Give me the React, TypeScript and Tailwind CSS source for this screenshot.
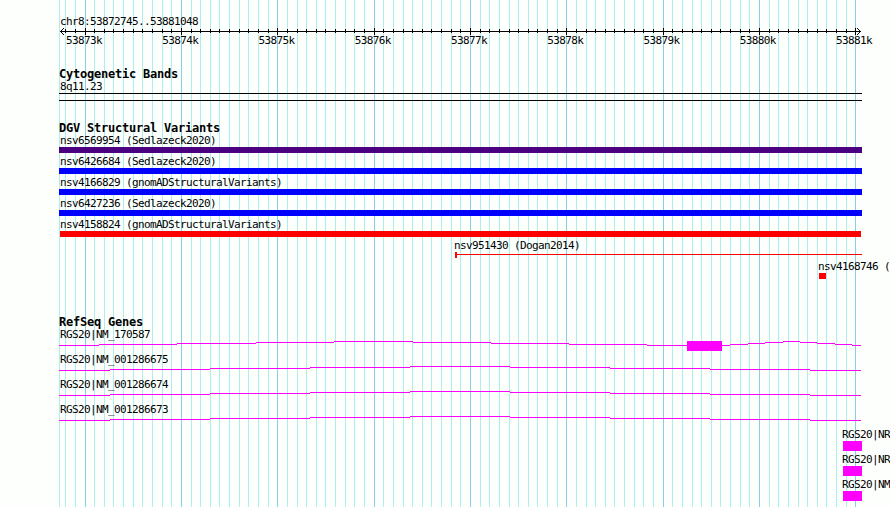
import React from "react";

const START = 53872745;
const END = 53881048;
const LEFT = 60;
const SPAN = 800;

const toX = (bp: number) => Math.round(LEFT + ((bp - START) * SPAN) / (END - START));

const ticks: { x: number; major: boolean; label: string }[] = [];
for (let bp = 53872800; bp <= 53881000; bp += 100) {
  ticks.push({ x: toX(bp), major: bp % 1000 === 0, label: `${bp / 1000}k` });
}

const variants = [
  { name: "nsv6569954 (Sedlazeck2020)", bar: "ml-[59px] w-[803px] bg-[#4b0082]" },
  { name: "nsv6426684 (Sedlazeck2020)", bar: "ml-[59px] w-[803px] bg-[#0000ff]" },
  { name: "nsv4166829 (gnomADStructuralVariants)", bar: "ml-[59px] w-[803px] bg-[#0000ff]" },
  { name: "nsv6427236 (Sedlazeck2020)", bar: "ml-[59px] w-[803px] bg-[#0000ff]" },
  { name: "nsv4158824 (gnomADStructuralVariants)", bar: "ml-[60px] w-[801px] bg-[#ff0000]" },
];

// Each step is [start x, y inside the 10px lane]
const longIntron = [[59, 4], [110, 3], [210, 2], [310, 1], [410, 0], [510, 1], [610, 2], [710, 3], [810, 4], [861, 4]];
const splitIntron = [
  [59, 4], [99, 3], [177, 2], [256, 1], [334, 0], [413, 1], [491, 2], [569, 3], [647, 4],
  [730, 3], [748, 2], [765, 1], [783, 0], [800, 1], [817, 2], [835, 3], [852, 4], [861, 4],
];

const genes = [
  { name: "RGS20|NM_170587", steps: splitIntron, exon: true },
  { name: "RGS20|NM_001286675", steps: longIntron, exon: false },
  { name: "RGS20|NM_001286674", steps: longIntron, exon: false },
  { name: "RGS20|NM_001286673", steps: longIntron, exon: false },
];

const edgeGenes = ["RGS20|NR", "RGS20|NR", "RGS20|NM"];

function Gridlines() {
  return (
    <svg className="absolute inset-0" width="890" height="507" shapeRendering="crispEdges">
      <rect x="59" y="0" width="1" height="507" fill="#afeeee" />
      {ticks.map((t) => (
        <rect key={t.x} x={t.x} y="0" width="1" height="507" fill={t.major ? "#87ceeb" : "#afeeee"} />
      ))}
    </svg>
  );
}

function Label({ text, className = "pl-[60px]" }: { text: string; className?: string }) {
  return (
    <div className={`h-[13px] whitespace-pre text-[11px] leading-[13px] tracking-[-0.623px] ${className}`}>
      {text}
    </div>
  );
}

function Heading({ text }: { text: string }) {
  return (
    <h2 className="h-[13px] whitespace-pre pl-[59px] text-[12px] font-bold leading-[13px] tracking-[-0.224px]">
      {text}
    </h2>
  );
}

function Ruler() {
  return (
    <div className="-mt-px">
      <svg className="block" width="890" height="8" shapeRendering="crispEdges">
        <rect x="60" y="4" width="801" height="1" />
        {ticks.map((t) => (
          <rect key={t.x} x={t.x} y={t.major ? 1 : 2} width="1" height={t.major ? 7 : 4} />
        ))}
        <path d="M60 4h1v1h-1z M61 3h1v1h-1z M62 2h1v1h-1z M63 1h1v1h-1z M61 5h1v1h-1z M62 6h1v1h-1z M63 7h1v1h-1z" />
        <path d="M860 4h1v1h-1z M859 3h1v1h-1z M858 2h1v1h-1z M857 1h1v1h-1z M859 5h1v1h-1z M858 6h1v1h-1z M857 7h1v1h-1z" />
      </svg>
      <div className="-mt-px flex h-[13px] pl-[66px]">
        {ticks.filter((t) => t.major).map((t) => (
          <span key={t.x} className="w-[96.25px] shrink-0 text-[11px] leading-[13px] tracking-[-0.623px]">
            {t.label}
          </span>
        ))}
      </div>
    </div>
  );
}

function GeneLane({ steps, exon }: { steps: number[][]; exon: boolean }) {
  return (
    <svg className="block" width="890" height="10" shapeRendering="crispEdges">
      {steps.slice(0, -1).map(([x, y], i) => (
        <rect key={x} x={x} y={y} width={steps[i + 1][0] - x} height="1" fill="#ff00ff" />
      ))}
      {exon && <rect x="687" y="0" width="35" height="10" fill="#ff00ff" />}
    </svg>
  );
}

export default function App() {
  return (
    <main className="relative h-[507px] w-[890px] overflow-hidden bg-[#fdfffc] font-['DejaVu_Sans_Mono',monospace] text-black">
      <Gridlines />
      <div className="relative flex flex-col">
        <section className="pt-[15px]">
          <Label text="chr8:53872745..53881048" />
          <Ruler />
        </section>

        <section className="pt-[21px]">
          <Heading text="Cytogenetic Bands" />
          <Label text="8q11.23" className="-mt-px pl-[60px]" />
          <div className="ml-[59px] h-2 w-[803px] border-y border-black" />
        </section>

        <section className="pt-[21px]">
          <Heading text="DGV Structural Variants" />
          <div className="-mt-px">
            {variants.map((v) => (
              <div key={v.name} className="h-[21px]">
                <Label text={v.name} />
                <div className={`h-[6px] ${v.bar}`} />
              </div>
            ))}
          </div>
          <div className="h-[21px]">
            <Label text="nsv951430 (Dogan2014)" className="pl-[454px]" />
            <div className="ml-[455px] flex h-[6px] w-[407px] items-start">
              <div className="h-[6px] w-[2px] bg-[#ff0000]" />
              <div className="mt-[2px] h-px flex-1 bg-[#ff0000]" />
            </div>
          </div>
          <div className="h-[21px]">
            <Label text="nsv4168746 (" className="pl-[818px]" />
            <div className="ml-[819px] h-[6px] w-[7px] bg-[#ff0000]" />
          </div>
        </section>

        <section className="pt-[35px]">
          <Heading text="RefSeq Genes" />
          <div className="-mt-px">
            {genes.map((g) => (
              <div key={g.name} className="h-[25px]">
                <Label text={g.name} />
                <GeneLane steps={g.steps} exon={g.exon} />
              </div>
            ))}
            {edgeGenes.map((name, i) => (
              <div key={i} className="h-[25px]">
                <Label text={name} className="pl-[842px]" />
                <div className="ml-[843px] h-[10px] w-[19px] bg-[#ff00ff]" />
              </div>
            ))}
          </div>
        </section>
      </div>
    </main>
  );
}
